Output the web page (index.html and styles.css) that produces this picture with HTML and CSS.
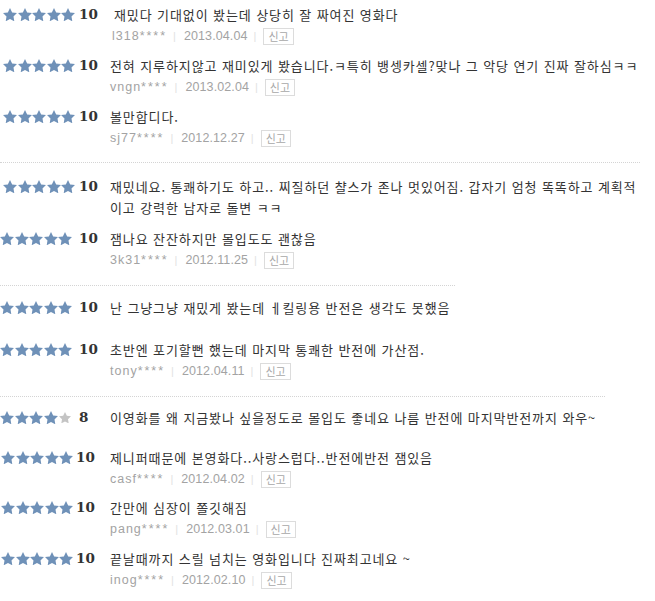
FILE: index.html
```html
<!DOCTYPE html>
<html lang="ko">
<head>
<meta charset="utf-8">
<link rel="stylesheet" href="styles.css">
</head>
<body>
<svg class="defs" width="0" height="0" aria-hidden="true">
  <symbol id="star" viewBox="2 2 20 19.02">
    <polygon points="12,2 15.09,8.26 22,9.27 17,14.14 18.18,21.02 12,17.77 5.82,21.02 7,14.14 2,9.27 8.91,8.26"/>
  </symbol>
</svg>
<div class="list">

  <div class="row r1 wide">
    <div class="stars"><svg><use href="#star"/></svg><svg><use href="#star"/></svg><svg><use href="#star"/></svg><svg><use href="#star"/></svg><svg><use href="#star"/></svg></div>
    <div class="score">10</div>
    <div class="body">
      <p class="text">재밌다 기대없이 봤는데 상당히 잘 짜여진 영화다</p>
      <div class="meta shift"><span class="user">l318<span class="mask">****</span></span><span class="bar">|</span><span class="date">2013.04.04</span><span class="bar">|</span><span class="report">신고</span></div>
    </div>
  </div>

  <div class="row gap8">
    <div class="stars"><svg><use href="#star"/></svg><svg><use href="#star"/></svg><svg><use href="#star"/></svg><svg><use href="#star"/></svg><svg><use href="#star"/></svg></div>
    <div class="score">10</div>
    <div class="body">
      <p class="text">전혀 지루하지않고 재미있게 봤습니다.ㅋ특히 뱅셍카셀?맞나 그 악당 연기 진짜 잘하심ㅋㅋ</p>
      <div class="meta"><span class="user">vngn<span class="mask">****</span></span><span class="bar">|</span><span class="date">2013.02.04</span><span class="bar">|</span><span class="report">신고</span></div>
    </div>
  </div>

  <div class="row gap8">
    <div class="stars"><svg><use href="#star"/></svg><svg><use href="#star"/></svg><svg><use href="#star"/></svg><svg><use href="#star"/></svg><svg><use href="#star"/></svg></div>
    <div class="score">10</div>
    <div class="body">
      <p class="text">볼만합디다.</p>
      <div class="meta"><span class="user">sj77<span class="mask">****</span></span><span class="bar">|</span><span class="date">2012.12.27</span><span class="bar">|</span><span class="report">신고</span></div>
    </div>
  </div>

  <hr class="sep sep1">

  <div class="row">
    <div class="stars"><svg><use href="#star"/></svg><svg><use href="#star"/></svg><svg><use href="#star"/></svg><svg><use href="#star"/></svg><svg><use href="#star"/></svg></div>
    <div class="score">10</div>
    <div class="body">
      <p class="text">재밌네요. 통쾌하기도 하고.. 찌질하던 챨스가 존나 멋있어짐. 갑자기 엄청 똑똑하고 계획적<br>이고 강력한 남자로 돌변 ㅋㅋ</p>
    </div>
  </div>

  <div class="row gap10 flush">
    <div class="stars"><svg><use href="#star"/></svg><svg><use href="#star"/></svg><svg><use href="#star"/></svg><svg><use href="#star"/></svg><svg><use href="#star"/></svg></div>
    <div class="score">10</div>
    <div class="body">
      <p class="text">잼나요 잔잔하지만 몰입도도 괜찮음</p>
      <div class="meta"><span class="user">3k31<span class="mask">****</span></span><span class="bar">|</span><span class="date">2012.11.25</span><span class="bar">|</span><span class="report">신고</span></div>
    </div>
  </div>

  <hr class="sep sep2">

  <div class="row flush">
    <div class="stars"><svg><use href="#star"/></svg><svg><use href="#star"/></svg><svg><use href="#star"/></svg><svg><use href="#star"/></svg><svg><use href="#star"/></svg></div>
    <div class="score">10</div>
    <div class="body">
      <p class="text">난 그냥그냥 재밌게 봤는데 ㅔ킬링용 반전은 생각도 못했음</p>
    </div>
  </div>

  <div class="row gap21 flush">
    <div class="stars"><svg><use href="#star"/></svg><svg><use href="#star"/></svg><svg><use href="#star"/></svg><svg><use href="#star"/></svg><svg><use href="#star"/></svg></div>
    <div class="score">10</div>
    <div class="body">
      <p class="text">초반엔 포기할뻔 했는데 마지막 통쾌한 반전에 가산점.</p>
      <div class="meta"><span class="user">tony<span class="mask">****</span></span><span class="bar">|</span><span class="date">2012.04.11</span><span class="bar">|</span><span class="report">신고</span></div>
    </div>
  </div>

  <hr class="sep sep3">

  <div class="row flush">
    <div class="stars"><svg><use href="#star"/></svg><svg><use href="#star"/></svg><svg><use href="#star"/></svg><svg><use href="#star"/></svg><svg class="off"><use href="#star"/></svg></div>
    <div class="score">8</div>
    <div class="body">
      <p class="text">이영화를 왜 지금봤나 싶을정도로 몰입도 좋네요 나름 반전에 마지막반전까지 와우~</p>
    </div>
  </div>

  <div class="row gap19 tight">
    <div class="stars"><svg><use href="#star"/></svg><svg><use href="#star"/></svg><svg><use href="#star"/></svg><svg><use href="#star"/></svg><svg><use href="#star"/></svg></div>
    <div class="score">10</div>
    <div class="body">
      <p class="text">제니퍼때문에 본영화다..사랑스럽다..반전에반전 잼있음</p>
      <div class="meta"><span class="user">casf<span class="mask">****</span></span><span class="bar">|</span><span class="date">2012.04.02</span><span class="bar">|</span><span class="report">신고</span></div>
    </div>
  </div>

  <div class="row gap7 tight">
    <div class="stars"><svg><use href="#star"/></svg><svg><use href="#star"/></svg><svg><use href="#star"/></svg><svg><use href="#star"/></svg><svg><use href="#star"/></svg></div>
    <div class="score">10</div>
    <div class="body">
      <p class="text">간만에 심장이 쫄깃해짐</p>
      <div class="meta"><span class="user">pang<span class="mask">****</span></span><span class="bar">|</span><span class="date">2012.03.01</span><span class="bar">|</span><span class="report">신고</span></div>
    </div>
  </div>

  <div class="row gap8 tight">
    <div class="stars"><svg><use href="#star"/></svg><svg><use href="#star"/></svg><svg><use href="#star"/></svg><svg><use href="#star"/></svg><svg><use href="#star"/></svg></div>
    <div class="score">10</div>
    <div class="body">
      <p class="text">끝날때까지 스릴 넘치는 영화입니다 진짜최고네요 ~</p>
      <div class="meta"><span class="user">inog<span class="mask">****</span></span><span class="bar">|</span><span class="date">2012.02.10</span><span class="bar">|</span><span class="report">신고</span></div>
    </div>
  </div>

</div>
</body>
</html>
```
FILE: styles.css
```css
html, body {
  margin: 0;
  padding: 0;
  background: #ffffff;
}

.defs {
  position: absolute;
  width: 0;
  height: 0;
  overflow: hidden;
}

.list {
  padding-top: 4px;
  width: 655px;
  overflow: hidden;
}

.row {
  display: grid;
  grid-template-columns: 79px 31px 1fr;
  align-items: start;
}

.row.wide {
  grid-template-columns: 79px 35px 1fr;
}

.row.tight {
  grid-template-columns: 76px 34px 1fr;
}

.gap7 { margin-top: 7px; }
.gap8 { margin-top: 8px; }
.gap10 { margin-top: 10px; }
.gap19 { margin-top: 19px; }
.gap21 { margin-top: 21px; }

.stars {
  display: flex;
  gap: 0.6px;
  height: 21px;
  align-items: center;
  padding-left: 3px;
}

.row.flush .stars {
  padding-left: 0;
}

.row.tight .stars {
  margin-left: -2px;
}

.stars svg {
  width: 14px;
  height: 13.3px;
  fill: #6f91b8;
  flex: none;
}

.stars svg.off {
  fill: #c4c4c4;
  width: 12px;
  height: 11.4px;
  margin-left: 1px;
}

.score {
  font-family: "DejaVu Serif", "Liberation Serif", serif;
  font-weight: bold;
  font-size: 13.5px;
  line-height: 21px;
  color: #333333;
}

.body {
  min-width: 0;
}

.text {
  margin: 0;
  font-family: "Noto Sans CJK KR", "Noto Sans", sans-serif;
  font-size: 13px;
  line-height: 21px;
  letter-spacing: 0.9px;
  color: #333333;
  white-space: nowrap;
}

.meta {
  display: flex;
  align-items: center;
  height: 22px;
  font-family: "Liberation Sans", Arial, sans-serif;
  font-size: 12.5px;
  color: #a3a3a3;
}

.meta.shift {
  margin-left: -2px;
}

.user {
  letter-spacing: 1px;
}

.mask {
  letter-spacing: 2px;
}

.bar {
  color: #e2e2e2;
  margin: 0 8px 0 6px;
  font-size: 11px;
}

.date {
  letter-spacing: 0.1px;
}

.report {
  font-family: "Noto Sans CJK KR", sans-serif;
  font-size: 11px;
  line-height: 15px;
  padding: 0 4px;
  border: 1px solid #dcdcdc;
  color: #a8a8a8;
  margin-left: -1px;
}

.sep {
  border: 0;
  border-top: 1px dotted #d4d4d4;
  height: 0;
  margin: 0;
}

.sep1 { width: 640px; margin-top: 13px; margin-bottom: 13px; }
.sep2 { width: 455px; margin-top: 14px; margin-bottom: 11px; }
.sep3 { width: 605px; margin-top: 14px; margin-bottom: 10px; }
```
